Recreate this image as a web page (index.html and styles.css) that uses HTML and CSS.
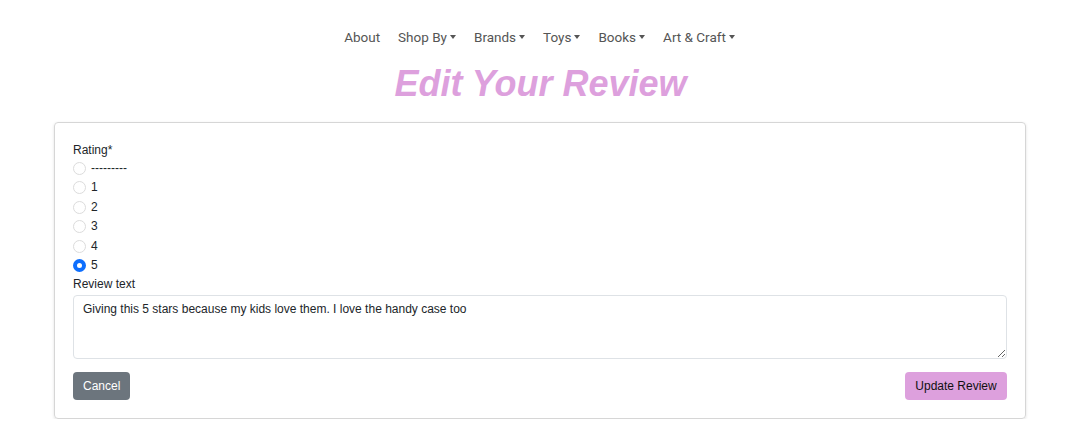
FILE: index.html
```html
<!DOCTYPE html>
<html>
<head>
<meta charset="utf-8">
<link rel="stylesheet" href="styles.css">
</head>
<body>
<nav class="nav">
  <a class="nav-link">About</a>
  <a class="nav-link dd">Shop By</a>
  <a class="nav-link dd">Brands</a>
  <a class="nav-link dd">Toys</a>
  <a class="nav-link dd">Books</a>
  <a class="nav-link dd">Art &amp; Craft</a>
</nav>
<h1 class="title">Edit Your Review</h1>
<div class="card">
  <form class="form">
    <div class="label label-rating">Rating*</div>
    <label class="opt"><span class="radio"></span><span>---------</span></label>
    <label class="opt"><span class="radio"></span><span>1</span></label>
    <label class="opt"><span class="radio"></span><span>2</span></label>
    <label class="opt"><span class="radio"></span><span>3</span></label>
    <label class="opt"><span class="radio"></span><span>4</span></label>
    <label class="opt"><span class="radio checked"></span><span>5</span></label>
    <div class="label label-text">Review text</div>
    <textarea class="textarea">Giving this 5 stars because my kids love them. I love the handy case too</textarea>
    <div class="actions">
      <button type="button" class="btn btn-cancel">Cancel</button>
      <button type="button" class="btn btn-update">Update Review</button>
    </div>
  </form>
</div>
</body>
</html>
```

FILE: styles.css
```css
html, body {
  margin: 0;
  padding: 0;
  background: #fff;
}
body {
  font-family: "Liberation Sans", Arial, sans-serif;
  color: #212529;
}
.nav {
  display: flex;
  justify-content: center;
  padding-top: 27px;
  height: 20px;
  margin-left: 14px;
}
.nav-link {
  font-family: Roboto, "Liberation Sans", sans-serif;
  font-size: 13.5px;
  color: #555;
  padding: 0 9px;
  line-height: 20px;
  display: flex;
  align-items: center;
}
.nav-link.dd::after {
  content: "";
  display: inline-block;
  margin-left: 3px;
  border-top: 4px solid #555;
  border-left: 3px solid transparent;
  border-right: 3px solid transparent;
  margin-top: 0;
}
.title {
  margin: 15px 0 0;
  text-align: center;
  font-size: 36px;
  font-style: italic;
  font-weight: bold;
  color: #dda0dd;
  line-height: 44px;
  height: 44px;
  padding-left: 16px;
}
.card {
  margin: 16px 39px 0 54px;
  border: 1px solid #d6d6d6;
  border-radius: 4px;
  box-shadow: 0 1px 3px rgba(0,0,0,0.12);
  padding: 18px 18px 18px 18px;
}
.form {
  display: flex;
  flex-direction: column;
  font-size: 12px;
}
.label {
  line-height: 19.5px;
  height: 19.5px;
}
.label-rating {
  height: 17.5px;
}
.label-text {
  height: 19px;
  line-height: 17.5px;
}
.opt {
  display: flex;
  align-items: center;
  gap: 5px;
  height: 19.5px;
  line-height: 19.5px;
}
.radio {
  width: 11px;
  height: 11px;
  border: 1px solid #dcdcdc;
  border-radius: 50%;
  box-sizing: content-box;
  background: #fff;
}
.radio.checked {
  width: 5px;
  height: 5px;
  border: 4px solid #0d6efd;
  background: #fff;
}
.textarea {
  margin-top: 0;
  height: 64px;
  box-sizing: border-box;
  border: 1px solid #dee2e6;
  border-radius: 4px;
  padding: 6px 9px;
  font-family: "Liberation Sans", Arial, sans-serif;
  font-size: 12px;
  color: #212529;
  resize: vertical;
  line-height: 15px;
}
.actions {
  display: flex;
  justify-content: space-between;
  margin-top: 13px;
}
.btn {
  height: 28px;
  border: none;
  border-radius: 4px;
  font-family: "Liberation Sans", Arial, sans-serif;
  font-size: 12px;
  padding: 0 10px;
  cursor: pointer;
}
.btn-cancel {
  background: #6c757d;
  color: #fff;
  width: 57px;
}
.btn-update {
  background: #dda0dd;
  color: #111;
  width: 102px;
}
```
